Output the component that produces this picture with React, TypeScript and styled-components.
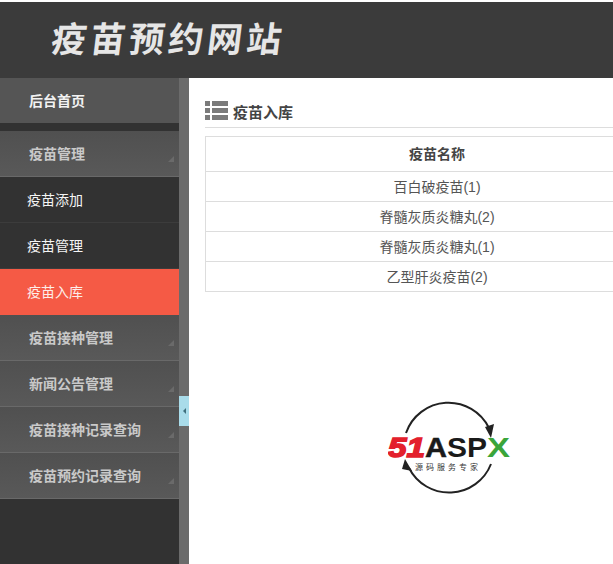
import React from "react";
import styled, { createGlobalStyle } from "styled-components";

const Global = createGlobalStyle`
  html, body { margin: 0; padding: 0; height: 100%; overflow: hidden; background: #fff; }
  body { font-family: "Liberation Sans", "Noto Sans CJK SC", sans-serif; }
  #root { height: 564px; overflow: hidden; }
`;

const Page = styled.div`
  width: 613px;
  height: 564px;
  padding-top: 2px;
  box-sizing: border-box;
  display: flex;
  flex-direction: column;
  overflow: hidden;
  background: #fff;
`;

const Header = styled.header`
  height: 76px;
  flex: none;
  background: #3b3b3b;
  display: flex;
  align-items: center;
  padding: 0 0 8px 52px;
  box-sizing: border-box;
`;

const Title = styled.h1`
  margin: 0;
  font: 700 35px "Noto Sans CJK SC", sans-serif;
  letter-spacing: 4px;
  color: #e6e6e6;
  transform: skewX(-7deg);
`;

const Body = styled.div`
  flex: 1;
  display: flex;
  min-height: 0;
`;

const Sidebar = styled.nav`
  width: 179px;
  flex: none;
  background: #323232;
  display: flex;
  flex-direction: column;
`;

const Strip = styled.div`
  width: 10px;
  flex: none;
  background: #6b6b6b;
  position: relative;
`;

const Collapse = styled.div`
  position: absolute;
  top: 318px;
  left: 0;
  width: 10px;
  height: 30px;
  background: #a9dcea;
  display: flex;
  align-items: center;
  justify-content: center;
`;

const Arrow = styled.span`
  width: 0;
  height: 0;
  border-style: solid;
  border-width: 3px 3px 3px 0;
  border-color: transparent #3f6f7c transparent transparent;
`;

const HomeItem = styled.div`
  height: 45px;
  flex: none;
  box-sizing: border-box;
  background: #555;
  margin-bottom: 8px;
  padding: 0 0 2px 29px;
  display: flex;
  align-items: center;
  font-size: 14px;
  font-weight: 700;
  color: #f2f2f2;
`;

const GroupItem = styled.div`
  height: 46px;
  flex: none;
  box-sizing: border-box;
  background: linear-gradient(#505050, #595959);
  border-bottom: 1px solid #696969;
  padding: 0 5px 2px 29px;
  display: flex;
  align-items: center;
  justify-content: space-between;
  font-size: 14px;
  font-weight: 700;
  color: #c9c9c9;
`;

const Corner = styled.span`
  width: 0;
  height: 0;
  margin-top: 12px;
  border-style: solid;
  border-width: 0 0 6px 6px;
  border-color: transparent transparent #6a6a6a transparent;
`;

const SubItem = styled.div<{ $active?: boolean }>`
  height: 46px;
  flex: none;
  box-sizing: border-box;
  background: ${(p) => (p.$active ? "#f55a45" : "#323232")};
  border-bottom: 1px solid ${(p) => (p.$active ? "#f55a45" : "#3c3c3c")};
  padding: 0 0 2px 27px;
  display: flex;
  align-items: center;
  font-size: 14px;
  color: ${(p) => (p.$active ? "#fdeee9" : "#f5f5f5")};
`;

const Main = styled.main`
  flex: 1;
  min-width: 0;
  padding: 22px 0 0 16px;
  overflow: hidden;
  background: #fff;
`;

const Content = styled.div`
  width: 464px;
`;

const Heading = styled.div`
  height: 28px;
  box-sizing: border-box;
  border-bottom: 1px solid #ddd;
  display: flex;
  align-items: flex-start;
  gap: 5px;
  font-size: 15px;
  font-weight: 700;
  line-height: 26px;
  color: #444;
`;

const ListIcon = styled.svg`
  width: 23px;
  height: 20px;
  flex: none;
  fill: #7b7b7b;
`;

const Table = styled.table`
  width: 100%;
  margin-top: 8px;
  border-collapse: collapse;
  font-size: 14px;
  color: #555;
`;

const Th = styled.th`
  height: 32px;
  padding: 0 0 2px;
  border: 1px solid #ddd;
  font-weight: 700;
  color: #444;
  text-align: center;
`;

const Td = styled.td`
  height: 27px;
  padding: 0 0 2px;
  border: 1px solid #ddd;
  text-align: center;
`;

const LogoWrap = styled.svg`
  display: block;
  width: 130px;
  height: 96px;
  margin: 108px 0 0 183px;
`;

const LogoWord = styled.text`
  font-family: "Liberation Sans", sans-serif;
  font-weight: 700;
  font-size: 28px;
`;

const LogoTag = styled.text`
  font-family: "Noto Sans CJK SC", sans-serif;
  font-size: 8px;
  letter-spacing: 3px;
  fill: #333;
`;

const rows = ["百白破疫苗(1)", "脊髓灰质炎糖丸(2)", "脊髓灰质炎糖丸(1)", "乙型肝炎疫苗(2)"];
const groupsAfter = ["疫苗接种管理", "新闻公告管理", "疫苗接种记录查询", "疫苗预约记录查询"];

export default function App() {
  return (
    <Page>
      <Global />
      <Header>
        <Title>疫苗预约网站</Title>
      </Header>
      <Body>
        <Sidebar>
          <HomeItem>后台首页</HomeItem>
          <GroupItem>
            疫苗管理
            <Corner />
          </GroupItem>
          <SubItem>疫苗添加</SubItem>
          <SubItem>疫苗管理</SubItem>
          <SubItem $active>疫苗入库</SubItem>
          {groupsAfter.map((g) => (
            <GroupItem key={g}>
              {g}
              <Corner />
            </GroupItem>
          ))}
        </Sidebar>
        <Strip>
          <Collapse>
            <Arrow />
          </Collapse>
        </Strip>
        <Main>
          <Content>
            <Heading>
              <ListIcon viewBox="0 0 23 20">
                <rect x="0" y="1" width="5" height="5" />
                <rect x="7" y="1" width="16" height="5" />
                <rect x="0" y="8" width="5" height="5" />
                <rect x="7" y="8" width="16" height="5" />
                <rect x="0" y="15" width="5" height="5" />
                <rect x="7" y="15" width="16" height="5" />
              </ListIcon>
              疫苗入库
            </Heading>
            <Table>
              <thead>
                <tr>
                  <Th>疫苗名称</Th>
                </tr>
              </thead>
              <tbody>
                {rows.map((r) => (
                  <tr key={r}>
                    <Td>{r}</Td>
                  </tr>
                ))}
              </tbody>
            </Table>
          </Content>
          <LogoWrap viewBox="0 0 130 96">
            <path d="M18 33 A45 45 0 0 1 101 28" fill="none" stroke="#222" strokeWidth="2" />
            <path d="M97 27 L106 24 L103 38 Z" fill="#222" />
            <path d="M103 64 A45 45 0 0 1 21 68" fill="none" stroke="#222" strokeWidth="2" />
            <path d="M14 69 L24 71 L17 59 Z" fill="#222" />
            <LogoWord x="0" y="57" fontStyle="italic" fill="#e3202c" stroke="#e3202c" strokeWidth="1.5" textLength="37" lengthAdjust="spacingAndGlyphs">51</LogoWord>
            <LogoWord x="37" y="57" fill="#1a1a1a" stroke="#1a1a1a" strokeWidth="0.5" textLength="22" lengthAdjust="spacingAndGlyphs">A</LogoWord>
            <LogoWord x="59" y="57" fill="#1a1a1a" textLength="40" style={{ textTransform: "uppercase" }} lengthAdjust="spacingAndGlyphs">sp</LogoWord>
            <LogoWord x="99" y="57" fill="#3aa53a" textLength="23" style={{ textTransform: "uppercase" }} lengthAdjust="spacingAndGlyphs">x</LogoWord>
            <LogoTag x="27" y="70">源码服务专家</LogoTag>
          </LogoWrap>
        </Main>
      </Body>
    </Page>
  );
}
